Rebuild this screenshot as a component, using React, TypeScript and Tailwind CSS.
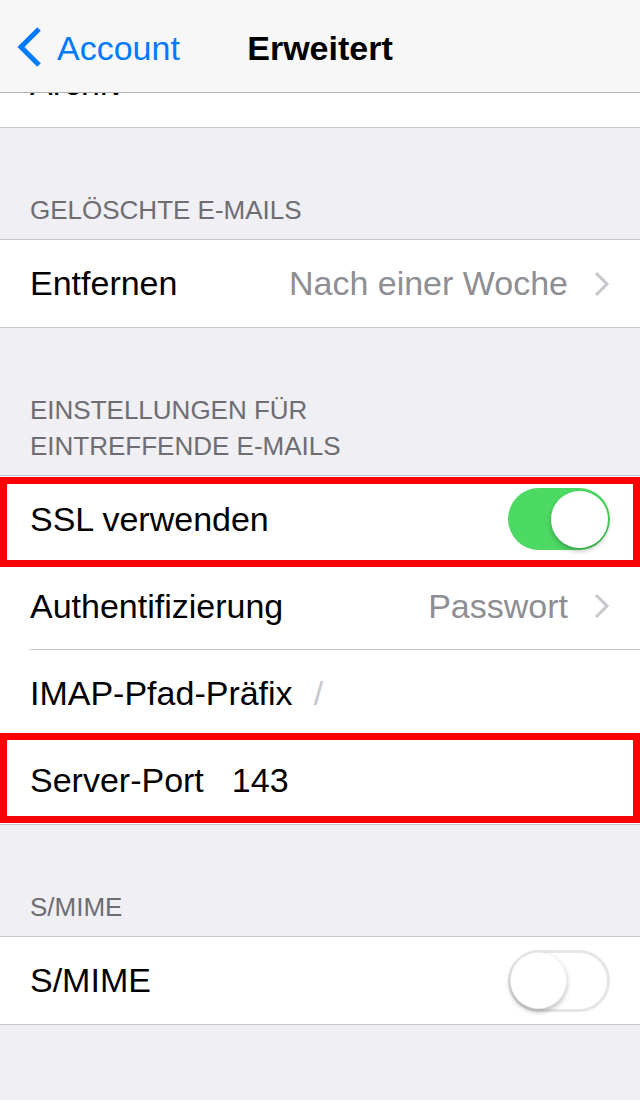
import React from 'react';

const font = "font-['Liberation_Sans','Helvetica_Neue',Arial,sans-serif]";

function Chevron() {
  return (
    <svg width="16" height="26" viewBox="0 0 16 26" className="ml-[26px] shrink-0">
      <polyline points="2,2 13,13 2,24" fill="none" stroke="#c7c7cc" strokeWidth="3" />
    </svg>
  );
}

function Toggle({ on }: { on: boolean }) {
  if (on) {
    return (
      <div className="w-[102px] h-[62px] rounded-full bg-[#4cd964] flex items-center justify-end p-[2px] shrink-0">
        <div className="w-[57px] h-[57px] rounded-full bg-white shadow-[0_3px_5px_rgba(0,0,0,0.25)]" />
      </div>
    );
  }
  return (
    <div className="w-[102px] h-[62px] rounded-full border-[3px] border-[#e5e5ea] bg-white flex items-center shrink-0">
      <div className="w-[57px] h-[57px] -ml-[1px] rounded-full bg-white border border-[rgba(0,0,0,0.06)] shadow-[0_3px_5px_rgba(0,0,0,0.25)]" />
    </div>
  );
}

function SectionHeader({ lines }: { lines: string[] }) {
  return (
    <div className="pt-[64px] pb-[11px] px-[30px] text-[26px] leading-[36px] text-[#6d6d72]">
      {lines.map((l) => (
        <div key={l}>{l}</div>
      ))}
    </div>
  );
}

interface RowProps {
  children: React.ReactNode;
  last?: boolean;
  highlight?: 'ssl' | 'port';
}

function Row({ children, last, highlight }: RowProps) {
  return (
    <div className="relative pl-[30px]">
      <div
        className={`h-[87px] pr-[30px] flex items-center text-[34px] text-black ${
          last ? '' : 'border-b border-[#c8c7cc]'
        }`}
      >
        {children}
      </div>
      {highlight === 'ssl' && (
        <div className="absolute left-0 right-0 top-[1px] h-[90px] border-[7px] border-[#ff0000]" />
      )}
      {highlight === 'port' && (
        <div className="absolute left-0 right-0 top-[-4px] h-[90px] border-[7px] border-[#ff0000]" />
      )}
    </div>
  );
}

export default function App() {
  return (
    <div className={`w-[640px] min-h-[1100px] bg-[#efeff4] ${font}`}>
      {/* nav bar */}
      <div className="h-[93px] pt-[4px] bg-[#f7f7f7] border-b border-[#b2b2b2] grid grid-cols-[1fr_auto_1fr] items-center">
        <div className="flex items-center pl-[17px] text-[#007aff] text-[34px]">
          <svg width="26" height="42" viewBox="0 0 26 42" className="-mt-[2px]">
            <polyline points="22,3 4,21 22,39" fill="none" stroke="#007aff" strokeWidth="5" />
          </svg>
          <span className="ml-[14px]">Account</span>
        </div>
        <div className="text-[34px] font-bold text-black">Erweitert</div>
        <div />
      </div>

      {/* Archiv row, scrolled mostly under the nav */}
      <div className="h-[35px] bg-white border-b border-[#c8c7cc] overflow-hidden pl-[30px]">
        <div className="text-[34px] leading-[34px] text-black -mt-[27px]">Archiv</div>
      </div>

      <SectionHeader lines={['GELÖSCHTE E-MAILS']} />
      <div className="bg-white border-y border-[#c8c7cc]">
        <Row last>
          <span>Entfernen</span>
          <span className="ml-auto text-[#8e8e93]">Nach einer Woche</span>
          <Chevron />
        </Row>
      </div>

      <SectionHeader lines={['EINSTELLUNGEN FÜR', 'EINTREFFENDE E-MAILS']} />
      <div className="bg-white border-y border-[#c8c7cc]">
        <Row highlight="ssl">
          <span>SSL verwenden</span>
          <div className="ml-auto">
            <Toggle on />
          </div>
        </Row>
        <Row>
          <span>Authentifizierung</span>
          <span className="ml-auto text-[#8e8e93]">Passwort</span>
          <Chevron />
        </Row>
        <Row>
          <span>IMAP-Pfad-Präfix</span>
          <span className="ml-[21px] text-[#c7c7cd]">/</span>
        </Row>
        <Row last highlight="port">
          <span>Server-Port</span>
          <span className="ml-[28px]">143</span>
        </Row>
      </div>

      <SectionHeader lines={['S/MIME']} />
      <div className="bg-white border-y border-[#c8c7cc]">
        <Row last>
          <span>S/MIME</span>
          <div className="ml-auto">
            <Toggle on={false} />
          </div>
        </Row>
      </div>
    </div>
  );
}
